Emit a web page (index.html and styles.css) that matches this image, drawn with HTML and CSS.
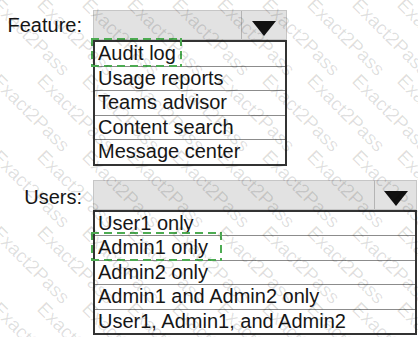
FILE: index.html
```html
<!DOCTYPE html>
<html lang="en">

<head>
    <meta charset="UTF-8">
    <meta name="viewport" content="width=device-width, initial-scale=1.0">
    <title>Feature / Users</title>
    <link rel="stylesheet" href="styles.css">
</head>

<body>
    <main class="form">
        <div class="field feature">
            <span class="label">Feature:</span>
            <div class="combo">
                <div class="select">
                    <span class="value"></span>
                    <span class="arrow">
                        <svg width="24" height="15" viewBox="0 0 24 15"><polygon points="0,0 24,0 12,15" /></svg>
                    </span>
                </div>
                <ul class="options">
                    <li><span class="pick">Audit log</span></li>
                    <li>Usage reports</li>
                    <li>Teams advisor</li>
                    <li>Content search</li>
                    <li>Message center</li>
                </ul>
            </div>
        </div>

        <div class="field users">
            <span class="label">Users:</span>
            <div class="combo">
                <div class="select">
                    <span class="value"></span>
                    <span class="arrow">
                        <svg width="24" height="15" viewBox="0 0 24 15"><polygon points="0,0 24,0 12,15" /></svg>
                    </span>
                </div>
                <ul class="options">
                    <li>User1 only</li>
                    <li><span class="pick wide">Admin1 only</span></li>
                    <li>Admin2 only</li>
                    <li>Admin1 and Admin2 only</li>
                    <li>User1, Admin1, and Admin2</li>
                </ul>
            </div>
        </div>

        <!-- watermark -->
        <div class="marks">
            <span>Exact2Pass</span><span>Exact2Pass</span><span>Exact2Pass</span><span>Exact2Pass</span><span>Exact2Pass</span>
            <span>Exact2Pass</span><span>Exact2Pass</span><span>Exact2Pass</span><span>Exact2Pass</span><span>Exact2Pass</span>
            <span>Exact2Pass</span><span>Exact2Pass</span><span>Exact2Pass</span><span>Exact2Pass</span><span>Exact2Pass</span>
            <span>Exact2Pass</span><span>Exact2Pass</span><span>Exact2Pass</span><span>Exact2Pass</span><span>Exact2Pass</span>
            <span>Exact2Pass</span><span>Exact2Pass</span><span>Exact2Pass</span><span>Exact2Pass</span><span>Exact2Pass</span>
            <span>Exact2Pass</span><span>Exact2Pass</span><span>Exact2Pass</span><span>Exact2Pass</span><span>Exact2Pass</span>
            <span>Exact2Pass</span><span>Exact2Pass</span><span>Exact2Pass</span><span>Exact2Pass</span><span>Exact2Pass</span>
            <span>Exact2Pass</span><span>Exact2Pass</span><span>Exact2Pass</span><span>Exact2Pass</span><span>Exact2Pass</span>
            <span>Exact2Pass</span><span>Exact2Pass</span><span>Exact2Pass</span><span>Exact2Pass</span><span>Exact2Pass</span>
            <span>Exact2Pass</span><span>Exact2Pass</span><span>Exact2Pass</span><span>Exact2Pass</span><span>Exact2Pass</span>
        </div>
    </main>
</body>

</html>
```

FILE: styles.css
```css
body {
    margin: 0;
    background: #fff;
    font-family: "Liberation Sans", Arial, sans-serif;
    font-size: 20px;
    color: #161616;
}

.form {
    position: relative;
    height: 337px;
    padding-top: 10px;
    box-sizing: border-box;
    overflow: hidden;
}

.field {
    display: flex;
    align-items: flex-start;
}

.users {
    margin-top: 14px;
}

.label {
    width: 82px;
    margin-right: 11px;
    text-align: right;
    line-height: 30px;
}

.users .label {
    padding-top: 2px;
}

.feature .combo {
    width: 194px;
}

.users .combo {
    width: 324px;
}

.select {
    display: flex;
    height: 30px;
    box-sizing: border-box;
    border: 1px solid #c6c6c6;
    background: #e2e2e2;
}

.value {
    flex: 1;
}

.arrow {
    width: 45px;
    box-sizing: border-box;
    border-left: 1px solid #b4b4b4;
    display: flex;
    justify-content: center;
    padding-top: 10px;
}

.users .arrow {
    width: 42px;
}

.arrow svg {
    fill: #111;
}

.options {
    list-style: none;
    margin: 0;
    padding: 0;
    border: 2px solid #333;
}

.options li {
    height: 23.5px;
    line-height: 23.5px;
    padding-left: 3px;
    border-top: 1px solid #8c8c8c;
    white-space: nowrap;
}

.options li:first-child {
    border-top: none;
}

/* green dashed answer box, long dashes */
.pick {
    position: relative;
}

.pick::after {
    content: '';
    position: absolute;
    top: -4px;
    bottom: -3px;
    left: -7px;
    right: -6px;
    background:
        linear-gradient(90deg, #4dab52 8px, transparent 0) top left / 13px 2px repeat-x,
        linear-gradient(90deg, #4dab52 8px, transparent 0) bottom left / 13px 2px repeat-x,
        linear-gradient(180deg, #4dab52 8px, transparent 0) top left / 2px 13px repeat-y,
        linear-gradient(180deg, #4dab52 8px, transparent 0) top right / 2px 13px repeat-y;
}

.pick.wide::after {
    right: -14px;
}

.marks {
    position: absolute;
    top: -6px;
    left: 3px;
    display: grid;
    grid-template-columns: repeat(10, 45px);
    grid-auto-rows: 76px;
    pointer-events: none;
}

.marks span {
    display: block;
    width: max-content;
    font-size: 19px;
    color: rgba(0, 0, 0, 0.13);
    transform: rotate(45deg);
    transform-origin: 0 0;
}
```
